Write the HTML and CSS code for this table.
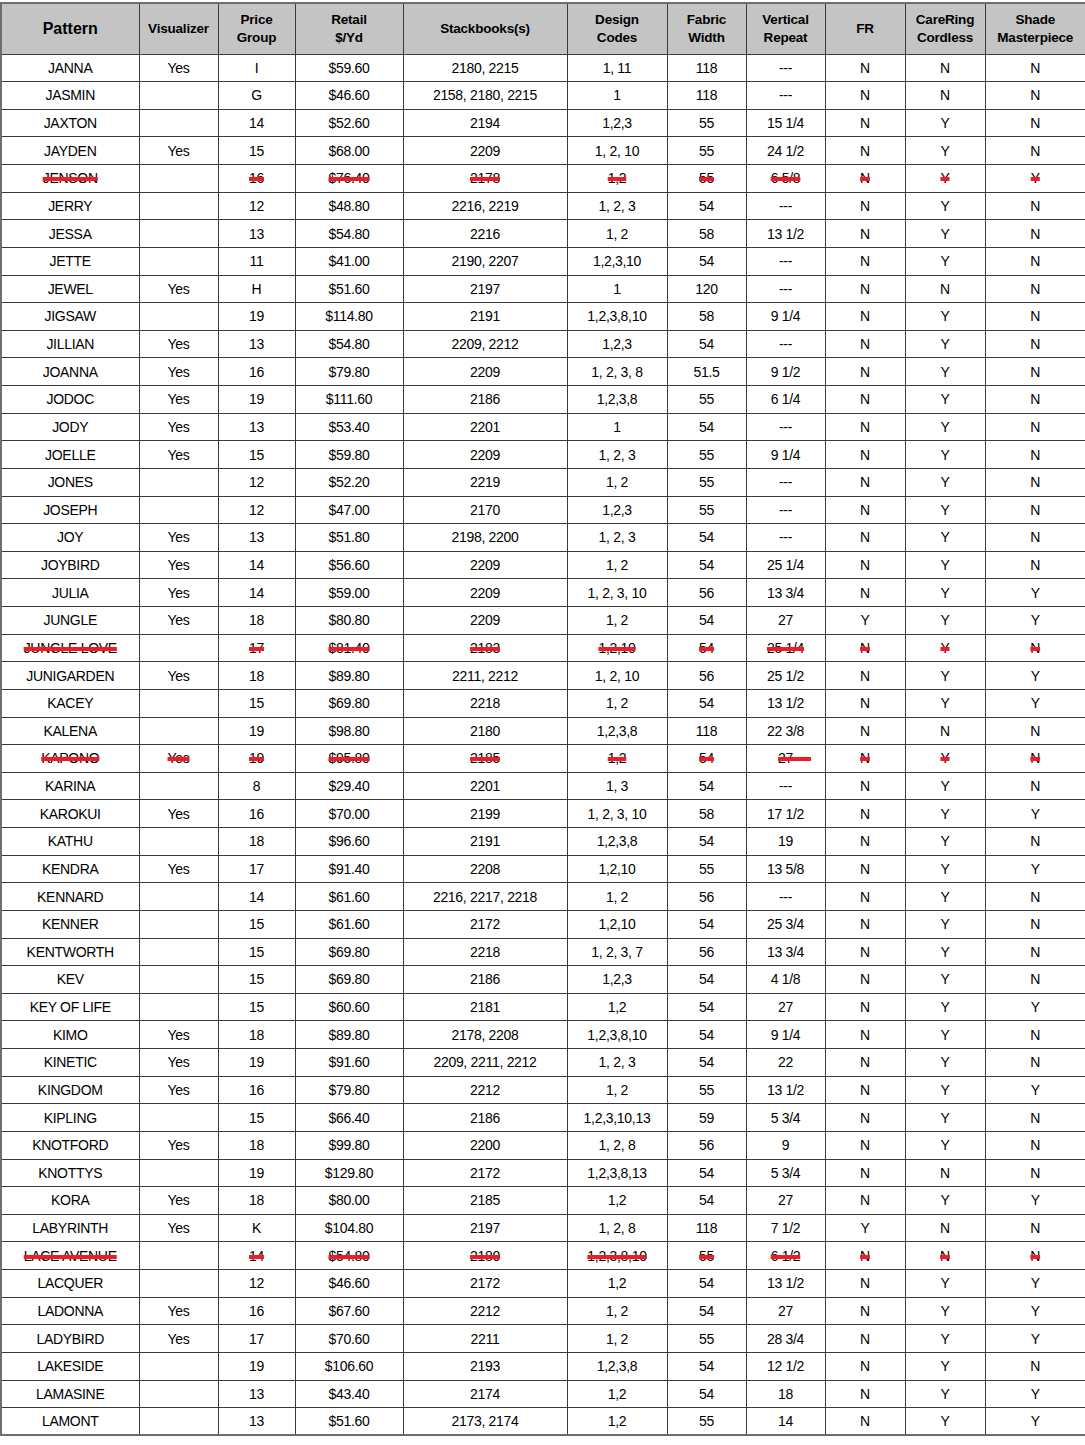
FILE: index.html
```html
<!DOCTYPE html>
<html lang="en">
<head>
<meta charset="utf-8">
<title>Pattern List</title>
<link rel="stylesheet" href="styles.css">
</head>
<body>
<div class="page">
<table class="grid">
<colgroup>
<col class="c-pattern"><col class="c-vis"><col class="c-pg"><col class="c-retail"><col class="c-stack"><col class="c-design"><col class="c-width"><col class="c-repeat"><col class="c-fr"><col class="c-care"><col class="c-shade">
</colgroup>
<thead>
<tr class="head">
<th class="big">Pattern</th><th>Visualizer</th><th>Price<br>Group</th><th>Retail<br>$/Yd</th><th>Stackbooks(s)</th><th>Design<br>Codes</th><th>Fabric<br>Width</th><th>Vertical<br>Repeat</th><th>FR</th><th>CareRing<br>Cordless</th><th>Shade<br>Masterpiece</th>
</tr>
</thead>
<tbody>
<tr><td>JANNA</td><td>Yes</td><td>I</td><td>$59.60</td><td>2180, 2215</td><td>1, 11</td><td>118</td><td>---</td><td>N</td><td>N</td><td>N</td></tr>
<tr><td>JASMIN</td><td></td><td>G</td><td>$46.60</td><td>2158, 2180, 2215</td><td>1</td><td>118</td><td>---</td><td>N</td><td>N</td><td>N</td></tr>
<tr><td>JAXTON</td><td></td><td>14</td><td>$52.60</td><td>2194</td><td>1,2,3</td><td>55</td><td>15 1/4</td><td>N</td><td>Y</td><td>N</td></tr>
<tr><td>JAYDEN</td><td>Yes</td><td>15</td><td>$68.00</td><td>2209</td><td>1, 2, 10</td><td>55</td><td>24 1/2</td><td>N</td><td>Y</td><td>N</td></tr>
<tr class="gone"><td><s>JENSON</s></td><td></td><td><s>16</s></td><td><s>$76.40</s></td><td><s>2178</s></td><td><s>1,2</s></td><td><s>55</s></td><td><s>6 5/8</s></td><td><s>N</s></td><td><s>Y</s></td><td><s>Y</s></td></tr>
<tr><td>JERRY</td><td></td><td>12</td><td>$48.80</td><td>2216, 2219</td><td>1, 2, 3</td><td>54</td><td>---</td><td>N</td><td>Y</td><td>N</td></tr>
<tr><td>JESSA</td><td></td><td>13</td><td>$54.80</td><td>2216</td><td>1, 2</td><td>58</td><td>13 1/2</td><td>N</td><td>Y</td><td>N</td></tr>
<tr><td>JETTE</td><td></td><td>11</td><td>$41.00</td><td>2190, 2207</td><td>1,2,3,10</td><td>54</td><td>---</td><td>N</td><td>Y</td><td>N</td></tr>
<tr><td>JEWEL</td><td>Yes</td><td>H</td><td>$51.60</td><td>2197</td><td>1</td><td>120</td><td>---</td><td>N</td><td>N</td><td>N</td></tr>
<tr><td>JIGSAW</td><td></td><td>19</td><td>$114.80</td><td>2191</td><td>1,2,3,8,10</td><td>58</td><td>9 1/4</td><td>N</td><td>Y</td><td>N</td></tr>
<tr><td>JILLIAN</td><td>Yes</td><td>13</td><td>$54.80</td><td>2209, 2212</td><td>1,2,3</td><td>54</td><td>---</td><td>N</td><td>Y</td><td>N</td></tr>
<tr><td>JOANNA</td><td>Yes</td><td>16</td><td>$79.80</td><td>2209</td><td>1, 2, 3, 8</td><td>51.5</td><td>9 1/2</td><td>N</td><td>Y</td><td>N</td></tr>
<tr><td>JODOC</td><td>Yes</td><td>19</td><td>$111.60</td><td>2186</td><td>1,2,3,8</td><td>55</td><td>6 1/4</td><td>N</td><td>Y</td><td>N</td></tr>
<tr><td>JODY</td><td>Yes</td><td>13</td><td>$53.40</td><td>2201</td><td>1</td><td>54</td><td>---</td><td>N</td><td>Y</td><td>N</td></tr>
<tr><td>JOELLE</td><td>Yes</td><td>15</td><td>$59.80</td><td>2209</td><td>1, 2, 3</td><td>55</td><td>9 1/4</td><td>N</td><td>Y</td><td>N</td></tr>
<tr><td>JONES</td><td></td><td>12</td><td>$52.20</td><td>2219</td><td>1, 2</td><td>55</td><td>---</td><td>N</td><td>Y</td><td>N</td></tr>
<tr><td>JOSEPH</td><td></td><td>12</td><td>$47.00</td><td>2170</td><td>1,2,3</td><td>55</td><td>---</td><td>N</td><td>Y</td><td>N</td></tr>
<tr><td>JOY</td><td>Yes</td><td>13</td><td>$51.80</td><td>2198, 2200</td><td>1, 2, 3</td><td>54</td><td>---</td><td>N</td><td>Y</td><td>N</td></tr>
<tr><td>JOYBIRD</td><td>Yes</td><td>14</td><td>$56.60</td><td>2209</td><td>1, 2</td><td>54</td><td>25 1/4</td><td>N</td><td>Y</td><td>N</td></tr>
<tr><td>JULIA</td><td>Yes</td><td>14</td><td>$59.00</td><td>2209</td><td>1, 2, 3, 10</td><td>56</td><td>13 3/4</td><td>N</td><td>Y</td><td>Y</td></tr>
<tr><td>JUNGLE</td><td>Yes</td><td>18</td><td>$80.80</td><td>2209</td><td>1, 2</td><td>54</td><td>27</td><td>Y</td><td>Y</td><td>Y</td></tr>
<tr class="gone"><td><s>JUNGLE LOVE</s></td><td></td><td><s>17</s></td><td><s>$81.40</s></td><td><s>2183</s></td><td><s>1,2,10</s></td><td><s>54</s></td><td><s>25 1/4</s></td><td><s>N</s></td><td><s>Y</s></td><td><s>N</s></td></tr>
<tr><td>JUNIGARDEN</td><td>Yes</td><td>18</td><td>$89.80</td><td>2211, 2212</td><td>1, 2, 10</td><td>56</td><td>25 1/2</td><td>N</td><td>Y</td><td>Y</td></tr>
<tr><td>KACEY</td><td></td><td>15</td><td>$69.80</td><td>2218</td><td>1, 2</td><td>54</td><td>13 1/2</td><td>N</td><td>Y</td><td>Y</td></tr>
<tr><td>KALENA</td><td></td><td>19</td><td>$98.80</td><td>2180</td><td>1,2,3,8</td><td>118</td><td>22 3/8</td><td>N</td><td>N</td><td>N</td></tr>
<tr class="gone"><td><s>KAPONO</s></td><td><s>Yes</s></td><td><s>19</s></td><td><s>$95.80</s></td><td><s>2185</s></td><td><s>1,2</s></td><td><s>54</s></td><td><s>27<span class="tail">&nbsp;&nbsp;&nbsp;&nbsp;&nbsp;</span></s></td><td><s>N</s></td><td><s>Y</s></td><td><s>N</s></td></tr>
<tr><td>KARINA</td><td></td><td>8</td><td>$29.40</td><td>2201</td><td>1, 3</td><td>54</td><td>---</td><td>N</td><td>Y</td><td>N</td></tr>
<tr><td>KAROKUI</td><td>Yes</td><td>16</td><td>$70.00</td><td>2199</td><td>1, 2, 3, 10</td><td>58</td><td>17 1/2</td><td>N</td><td>Y</td><td>Y</td></tr>
<tr><td>KATHU</td><td></td><td>18</td><td>$96.60</td><td>2191</td><td>1,2,3,8</td><td>54</td><td>19</td><td>N</td><td>Y</td><td>N</td></tr>
<tr><td>KENDRA</td><td>Yes</td><td>17</td><td>$91.40</td><td>2208</td><td>1,2,10</td><td>55</td><td>13 5/8</td><td>N</td><td>Y</td><td>Y</td></tr>
<tr><td>KENNARD</td><td></td><td>14</td><td>$61.60</td><td>2216, 2217, 2218</td><td>1, 2</td><td>56</td><td>---</td><td>N</td><td>Y</td><td>N</td></tr>
<tr><td>KENNER</td><td></td><td>15</td><td>$61.60</td><td>2172</td><td>1,2,10</td><td>54</td><td>25 3/4</td><td>N</td><td>Y</td><td>N</td></tr>
<tr><td>KENTWORTH</td><td></td><td>15</td><td>$69.80</td><td>2218</td><td>1, 2, 3, 7</td><td>56</td><td>13 3/4</td><td>N</td><td>Y</td><td>N</td></tr>
<tr><td>KEV</td><td></td><td>15</td><td>$69.80</td><td>2186</td><td>1,2,3</td><td>54</td><td>4 1/8</td><td>N</td><td>Y</td><td>N</td></tr>
<tr><td>KEY OF LIFE</td><td></td><td>15</td><td>$60.60</td><td>2181</td><td>1,2</td><td>54</td><td>27</td><td>N</td><td>Y</td><td>Y</td></tr>
<tr><td>KIMO</td><td>Yes</td><td>18</td><td>$89.80</td><td>2178, 2208</td><td>1,2,3,8,10</td><td>54</td><td>9 1/4</td><td>N</td><td>Y</td><td>N</td></tr>
<tr><td>KINETIC</td><td>Yes</td><td>19</td><td>$91.60</td><td>2209, 2211, 2212</td><td>1, 2, 3</td><td>54</td><td>22</td><td>N</td><td>Y</td><td>N</td></tr>
<tr><td>KINGDOM</td><td>Yes</td><td>16</td><td>$79.80</td><td>2212</td><td>1, 2</td><td>55</td><td>13 1/2</td><td>N</td><td>Y</td><td>Y</td></tr>
<tr><td>KIPLING</td><td></td><td>15</td><td>$66.40</td><td>2186</td><td>1,2,3,10,13</td><td>59</td><td>5 3/4</td><td>N</td><td>Y</td><td>N</td></tr>
<tr><td>KNOTFORD</td><td>Yes</td><td>18</td><td>$99.80</td><td>2200</td><td>1, 2, 8</td><td>56</td><td>9</td><td>N</td><td>Y</td><td>N</td></tr>
<tr><td>KNOTTYS</td><td></td><td>19</td><td>$129.80</td><td>2172</td><td>1,2,3,8,13</td><td>54</td><td>5 3/4</td><td>N</td><td>N</td><td>N</td></tr>
<tr><td>KORA</td><td>Yes</td><td>18</td><td>$80.00</td><td>2185</td><td>1,2</td><td>54</td><td>27</td><td>N</td><td>Y</td><td>Y</td></tr>
<tr><td>LABYRINTH</td><td>Yes</td><td>K</td><td>$104.80</td><td>2197</td><td>1, 2, 8</td><td>118</td><td>7 1/2</td><td>Y</td><td>N</td><td>N</td></tr>
<tr class="gone"><td><s>LACE AVENUE</s></td><td></td><td><s>14</s></td><td><s>$54.80</s></td><td><s>2180</s></td><td><s>1,2,3,8,10</s></td><td><s>55</s></td><td><s>6 1/2</s></td><td><s>N</s></td><td><s>N</s></td><td><s>N</s></td></tr>
<tr><td>LACQUER</td><td></td><td>12</td><td>$46.60</td><td>2172</td><td>1,2</td><td>54</td><td>13 1/2</td><td>N</td><td>Y</td><td>Y</td></tr>
<tr><td>LADONNA</td><td>Yes</td><td>16</td><td>$67.60</td><td>2212</td><td>1, 2</td><td>54</td><td>27</td><td>N</td><td>Y</td><td>Y</td></tr>
<tr><td>LADYBIRD</td><td>Yes</td><td>17</td><td>$70.60</td><td>2211</td><td>1, 2</td><td>55</td><td>28 3/4</td><td>N</td><td>Y</td><td>Y</td></tr>
<tr><td>LAKESIDE</td><td></td><td>19</td><td>$106.60</td><td>2193</td><td>1,2,3,8</td><td>54</td><td>12 1/2</td><td>N</td><td>Y</td><td>N</td></tr>
<tr><td>LAMASINE</td><td></td><td>13</td><td>$43.40</td><td>2174</td><td>1,2</td><td>54</td><td>18</td><td>N</td><td>Y</td><td>Y</td></tr>
<tr><td>LAMONT</td><td></td><td>13</td><td>$51.60</td><td>2173, 2174</td><td>1,2</td><td>55</td><td>14</td><td>N</td><td>Y</td><td>Y</td></tr>
</tbody>
</table>
</div>
</body>
</html>
```

FILE: styles.css
```css
html, body {
  margin: 0;
  padding: 0;
  background: #ffffff;
}

.page {
  padding: 2px 0 0 0;
}

.grid {
  border-collapse: collapse;
  table-layout: fixed;
  width: 1085px;
  font-family: "Liberation Sans", Arial, sans-serif;
  color: #000;
  border: 2px solid #6e6e6e;
}

.c-pattern { width: 138px; }
.c-vis { width: 79px; }
.c-pg { width: 77px; }
.c-retail { width: 108px; }
.c-stack { width: 164px; }
.c-design { width: 100px; }
.c-width { width: 79px; }
.c-repeat { width: 79px; }
.c-fr { width: 80px; }
.c-care { width: 80px; }
.c-shade { width: 101px; }

.grid th,
.grid td {
  border: 1px solid #3a3a3a;
  text-align: center;
  vertical-align: middle;
  padding: 0 2px;
  overflow: hidden;
  white-space: nowrap;
}

.head {
  height: 51px;
}

.head th {
  background: #c4c4c4;
  font-weight: bold;
  font-size: 13.5px;
  line-height: 18px;
  letter-spacing: -0.2px;
  padding-top: 1px;
}

.head th.big {
  font-size: 16px;
  letter-spacing: 0;
}

tbody tr {
  height: 27.64px;
}

tbody td {
  font-size: 14px;
  line-height: 16px;
  letter-spacing: -0.3px;
  padding-top: 1px;
}

.gone s {
  text-decoration-line: line-through;
  text-decoration-color: #ee1c24;
  text-decoration-thickness: 4px;
}

.tail {
  margin-right: -18px;
}
```
